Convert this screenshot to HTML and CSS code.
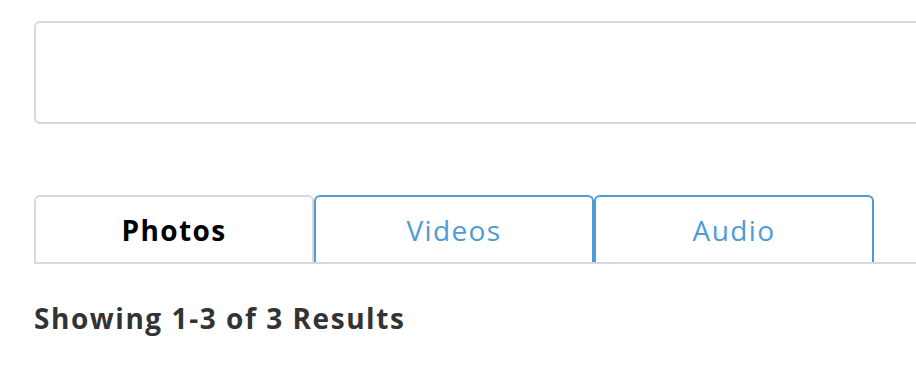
FILE: index.html
```html
<!DOCTYPE html>
<html lang="en">
<head>
<meta charset="utf-8">
<title>Media results</title>
<link rel="stylesheet" href="styles.css">
</head>
<body>
<main class="page">
  <div class="search-box"></div>
  <nav class="tabs">
    <div class="tab tab-active">Photos</div>
    <div class="tab">Videos</div>
    <div class="tab">Audio</div>
  </nav>
  <p class="results">Showing 1-3 of 3 Results</p>
</main>
</body>
</html>
```

FILE: styles.css
```css
html, body {
  margin: 0;
  padding: 0;
  overflow: hidden;
  background: #ffffff;
}

.page {
  padding: 21px 0 0 34px;
  width: 920px;
  font-family: "Open Sans", "Noto Sans", sans-serif;
}

.search-box {
  box-sizing: border-box;
  width: 920px;
  height: 103px;
  border: 2px solid #d9d9d9;
  border-radius: 6px;
}

.tabs {
  display: flex;
  margin-top: 71px;
  border-bottom: 2px solid #d9d9d9;
}

.tab {
  box-sizing: border-box;
  width: 280px;
  height: 67px;
  display: flex;
  align-items: center;
  justify-content: center;
  border: 2px solid #4f9bd9;
  border-bottom: none;
  border-radius: 6px 6px 0 0;
  font-size: 28px;
  letter-spacing: 1.4px;
  color: #4f9bd9;
  font-weight: 400;
}

.tab-active {
  border-color: #d9d9d9;
  color: #000000;
  font-weight: 700;
}

.results {
  margin: 36px 0 0 0;
  font-size: 28px;
  line-height: 36px;
  letter-spacing: 1.55px;
  font-weight: 700;
  color: #333333;
}
```
